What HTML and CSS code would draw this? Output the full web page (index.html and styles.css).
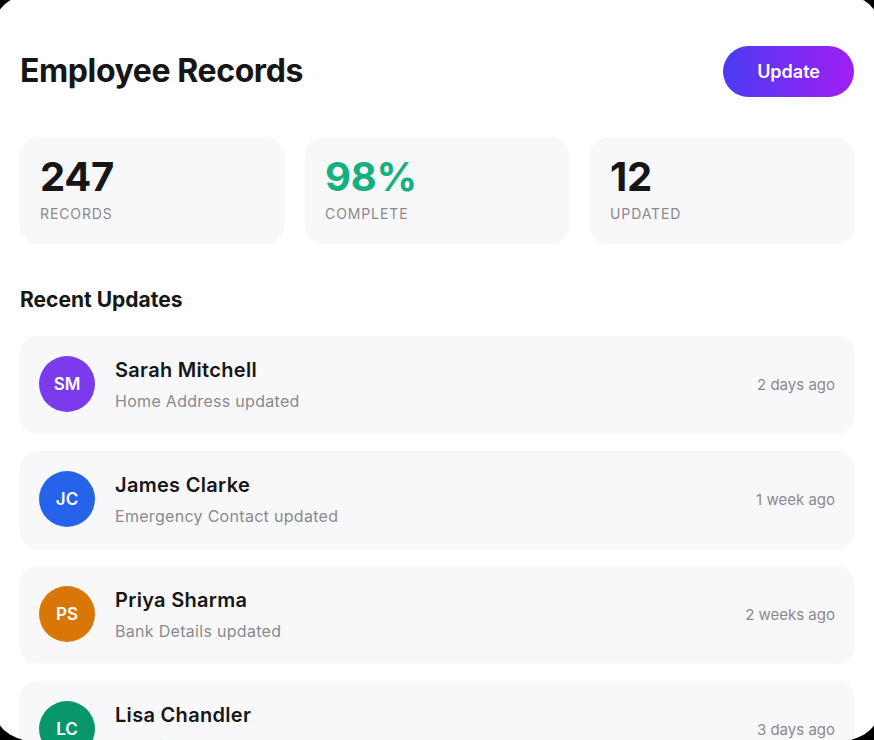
FILE: index.html
```html
<!DOCTYPE html>
<html lang="en">
<head>
    <meta charset="UTF-8">
    <meta name="viewport" content="width=device-width, initial-scale=1.0">
    <title>Employee Records</title>
    <link rel="stylesheet" href="styles.css">
</head>
<body>
    <div class="screen">
        <header class="top">
            <h1>Employee Records</h1>
            <button class="btn-update">Update</button>
        </header>

        <section class="stats">
            <div class="stat">
                <div class="stat-value">247</div>
                <div class="stat-label">Records</div>
            </div>
            <div class="stat">
                <div class="stat-value green">98%</div>
                <div class="stat-label">Complete</div>
            </div>
            <div class="stat">
                <div class="stat-value">12</div>
                <div class="stat-label">Updated</div>
            </div>
        </section>

        <h2>Recent Updates</h2>

        <ul class="updates">
            <li class="update">
                <div class="avatar purple">SM</div>
                <div class="info">
                    <div class="name">Sarah Mitchell</div>
                    <div class="detail">Home Address updated</div>
                </div>
                <div class="time">2 days ago</div>
            </li>
            <li class="update">
                <div class="avatar blue">JC</div>
                <div class="info">
                    <div class="name">James Clarke</div>
                    <div class="detail">Emergency Contact updated</div>
                </div>
                <div class="time">1 week ago</div>
            </li>
            <li class="update">
                <div class="avatar orange">PS</div>
                <div class="info">
                    <div class="name">Priya Sharma</div>
                    <div class="detail">Bank Details updated</div>
                </div>
                <div class="time">2 weeks ago</div>
            </li>
            <li class="update">
                <div class="avatar green">LC</div>
                <div class="info">
                    <div class="name">Lisa Chandler</div>
                    <div class="detail">Job Title updated</div>
                </div>
                <div class="time">3 days ago</div>
            </li>
        </ul>
    </div>
</body>
</html>
```

FILE: styles.css
```css
body {
    font-family: Inter, "Noto Sans", sans-serif;
    background-color: #000;
    color: #161616;
    margin: 0;
    padding: 0;
    overflow: hidden;
}
.screen {
    background-color: #fff;
    margin: -7px -3px 0;
    height: 749px;
    padding: 53px 23px 0;
    box-sizing: border-box;
    border-radius: 44px / 26px;
    overflow: hidden;
}
.top {
    display: flex;
    align-items: center;
    justify-content: space-between;
}
h1 {
    font-size: 32px;
    font-weight: 700;
    letter-spacing: -0.4px;
    line-height: 1.2;
    margin: 0;
}
.btn-update {
    font-family: inherit;
    background: linear-gradient(90deg, #4a3cf2, #a01ef3);
    color: #fff;
    border: none;
    height: 51px;
    padding: 0 34px;
    border-radius: 26px;
    font-size: 18px;
    font-weight: 600;
    cursor: pointer;
}
.stats {
    display: grid;
    grid-template-columns: repeat(3, 1fr);
    gap: 21px;
    margin-top: 41px;
}
.stat {
    background-color: #f8f8fa;
    border-radius: 18px;
    padding: 15px 20px 21px;
    box-shadow: 0 1px 3px rgba(0,0,0,0.03);
}
.stat-value {
    font-size: 40px;
    font-weight: 700;
    line-height: 48px;
    letter-spacing: -0.3px;
}
.stat-value.green {
    color: #14b07f;
}
.stat-label {
    font-size: 14px;
    line-height: 17px;
    letter-spacing: 0.9px;
    text-transform: uppercase;
    color: #8a8a8e;
    margin-top: 4px;
}
h2 {
    font-size: 21px;
    font-weight: 700;
    line-height: 24px;
    margin: 45px 0 24px;
}
.updates {
    list-style: none;
    margin: 0;
    padding: 0;
    display: flex;
    flex-direction: column;
    gap: 18px;
}
.update {
    display: flex;
    align-items: center;
    gap: 20px;
    background-color: #f8f8fa;
    border-radius: 18px;
    padding: 20px 19px 21px;
    box-shadow: 0 1px 3px rgba(0,0,0,0.03);
}
.avatar {
    width: 56px;
    height: 56px;
    border-radius: 50%;
    flex-shrink: 0;
    display: flex;
    align-items: center;
    justify-content: center;
    color: #fff;
    font-size: 17px;
    font-weight: 600;
}
.avatar.purple { background-color: #7c3aed; }
.avatar.blue { background-color: #2563eb; }
.avatar.orange { background-color: #d97706; }
.avatar.green { background-color: #079669; }
.info {
    flex: 1;
}
.name {
    font-size: 20px;
    font-weight: 600;
    line-height: 24px;
    letter-spacing: 0.3px;
}
.detail {
    font-size: 16px;
    line-height: 20px;
    letter-spacing: 0.3px;
    color: #8a8a8e;
    margin-top: 9px;
}
.time {
    font-size: 15px;
    color: #8a8a8e;
}
```
